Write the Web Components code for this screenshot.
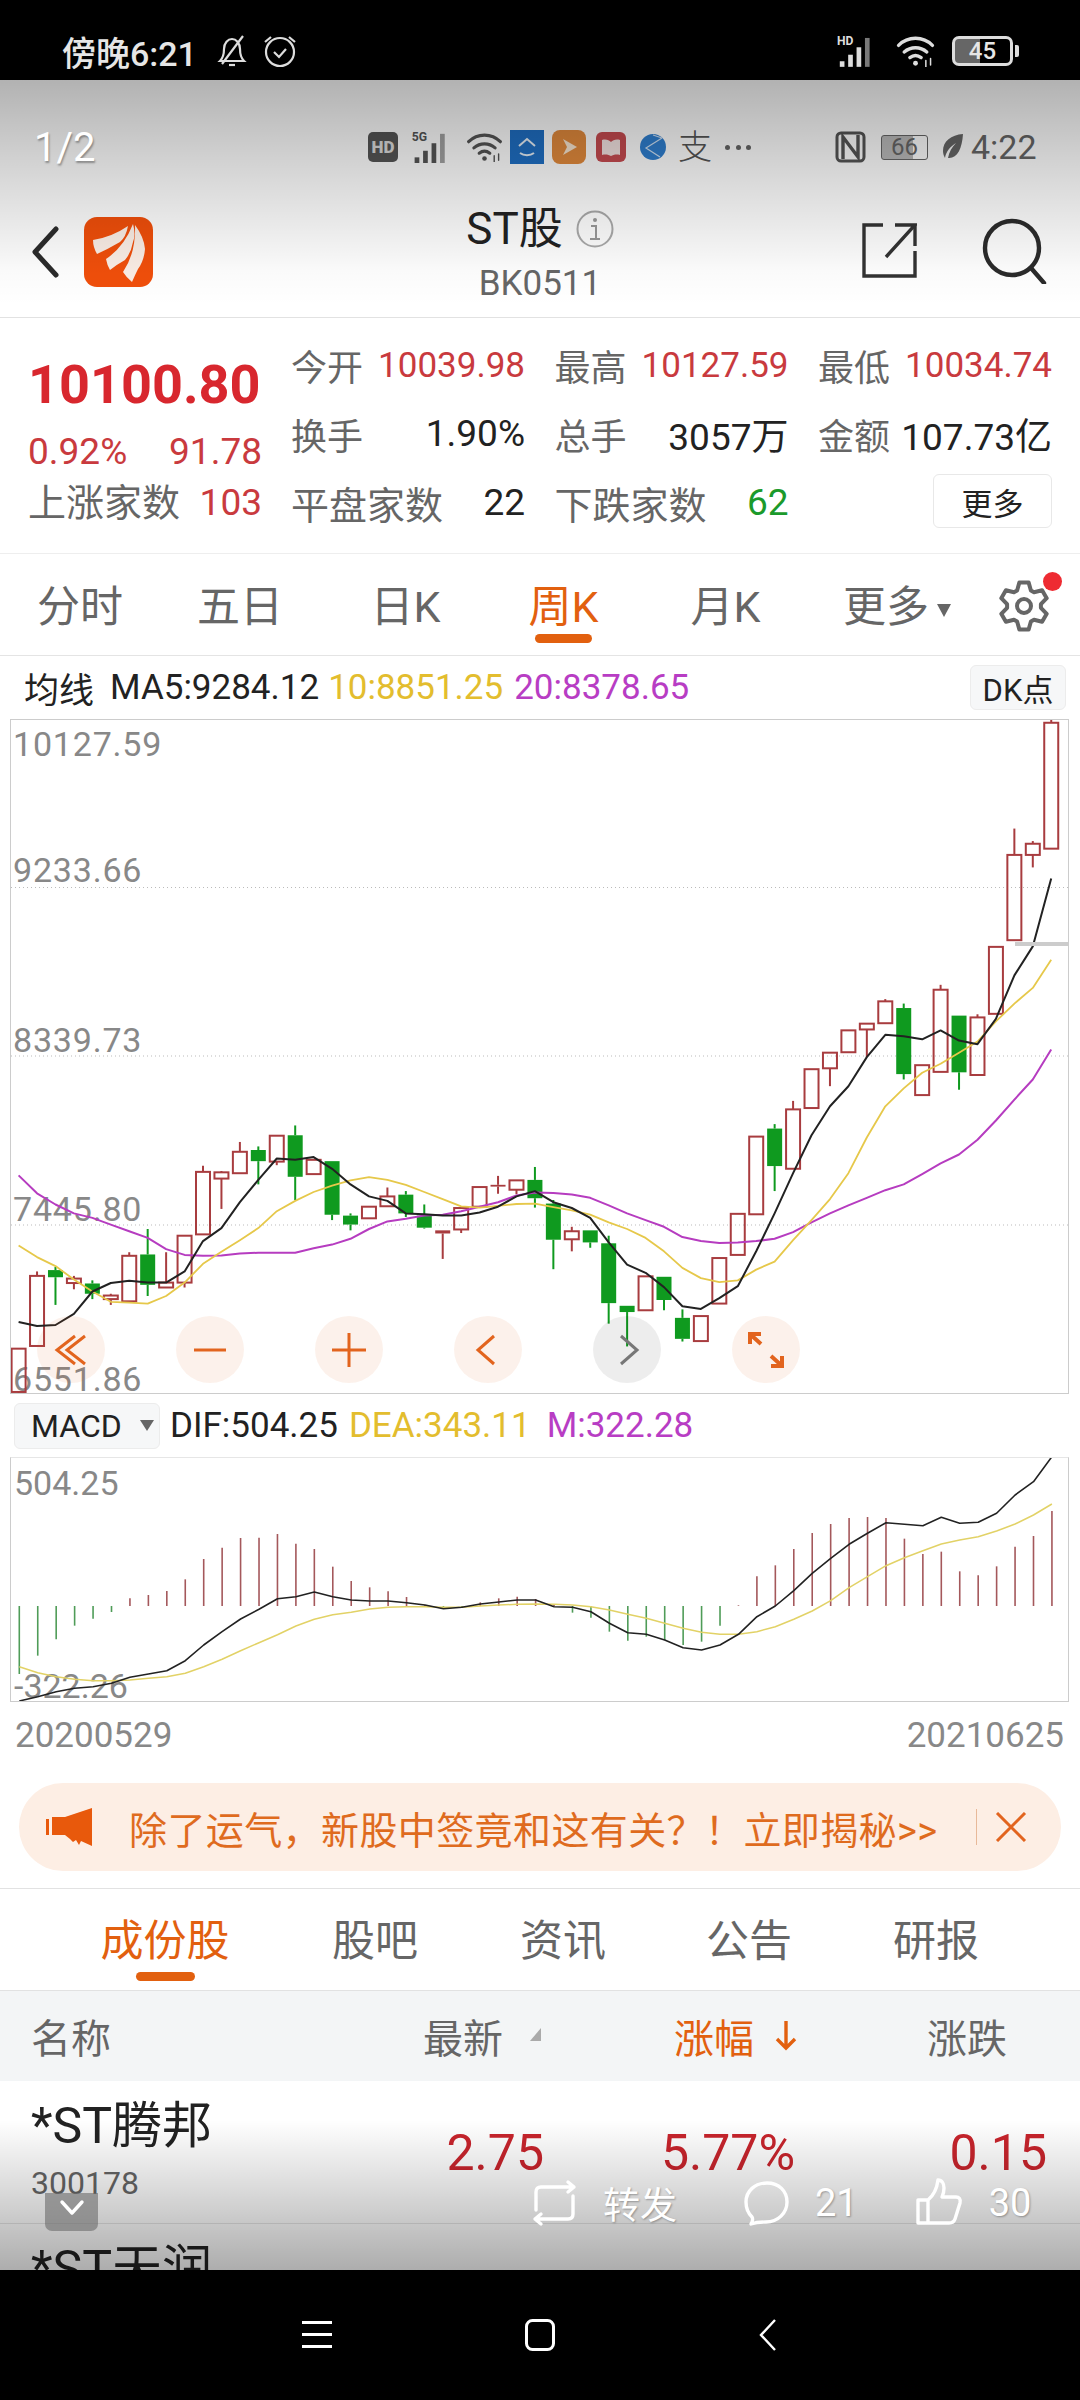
<!DOCTYPE html>
<html lang="zh">
<head>
<meta charset="utf-8">
<title>ST股</title>
<style>
  html, body { margin: 0; padding: 0; background: #000; }
  body {
    width: 1080px;
    height: 2400px;
    display: flex;
    flex-direction: column;
    overflow: hidden;
    font-family: Roboto, "Noto Sans CJK SC", sans-serif;
  }
  .screen {
    position: relative;
    height: 2190px;
    background: #fff;
    overflow: hidden;
  }
</style>
</head>
<body>
<status-bar></status-bar>
<div class="screen">
  <sys-tray></sys-tray>
  <app-header></app-header>
  <quote-panel>
    <quote-cell label="今开" tone="red">10039.98</quote-cell>
    <quote-cell label="最高" tone="red">10127.59</quote-cell>
    <quote-cell label="最低" tone="red">10034.74</quote-cell>
    <quote-cell label="换手">1.90%</quote-cell>
    <quote-cell label="总手">3057万</quote-cell>
    <quote-cell label="金额">107.73亿</quote-cell>
    <quote-cell label="平盘家数">22</quote-cell>
    <quote-cell label="下跌家数" tone="green">62</quote-cell>
    <more-button>更多</more-button>
  </quote-panel>
  <period-tabs></period-tabs>
  <ma-legend></ma-legend>
  <kline-chart></kline-chart>
  <macd-chart></macd-chart>
  <promo-banner>除了运气，新股中签竟和这有关？！立即揭秘&gt;&gt;</promo-banner>
  <sub-tabs></sub-tabs>
  <stock-table>
    <stock-row name="*ST腾邦" code="300178" price="2.75" pct="5.77%" chg="0.15"></stock-row>
    <stock-row name="*ST天润"></stock-row>
  </stock-table>
  <page-overlay></page-overlay>
</div>
<nav-bar></nav-bar>

<script>
const FONT = 'Roboto, "Noto Sans CJK SC", sans-serif';

// small base class, every element just declares css + html
class Shadowed extends HTMLElement {
  constructor() {
    super();
    this.attachShadow({ mode: 'open' });
  }
  connectedCallback() {
    this.shadowRoot.innerHTML = `<style>${this.css()}</style>${this.html()}`;
    this.afterRender && this.afterRender();
  }
  css() { return ''; }
  html() { return '<slot></slot>'; }
}

function wifiIcon(color, w, h) {
  return `<svg width="${w}" height="${h}" viewBox="0 0 40 34" fill="none" stroke="${color}" stroke-width="3.6" stroke-linecap="round">
    <path d="M2 11C12 1 28 1 38 11"/><path d="M8 18c7-6 17-6 24 0"/><path d="M14 24c4-3 8-3 12 0"/>
    <circle cx="20" cy="30" r="2.6" fill="${color}" stroke="none"/>
    <path d="M31 27v7M36 25v7" stroke-width="1.6"/></svg>`;
}

function signalIcon(color, w, h, label) {
  return `<svg width="${w}" height="${h}" viewBox="0 0 44 34">
    <g fill="${color}"><rect x="3" y="28" width="5" height="6"/><rect x="12" y="21" width="5" height="13"/><rect x="21" y="13" width="5" height="21"/>
    <rect x="30" y="3" width="5" height="31" opacity=".55"/></g>
    <text x="0" y="11" font-size="13" font-weight="700" fill="${color}" font-family='${FONT}'>${label}</text></svg>`;
}

class StatusBar extends Shadowed {
  css() {
    return `
      :host { display: flex; align-items: center; height: 80px; padding: 22px 0 0 62px; box-sizing: border-box; background: #000; color: #e6e6e6; font: 500 34px ${FONT}; }
      .time { width: 134px; white-space: nowrap; }
      svg { display: block; flex: none; }
      .batt { box-sizing: border-box; width: 61px; height: 30px; border: 3px solid #ddd; border-radius: 7px; display: flex; align-items: center; justify-content: center; font-size: 24px; font-weight: 500; line-height: 1; background: linear-gradient(90deg, #666 45%, transparent 45%); }
      .cap { width: 4px; height: 12px; margin-left: 2px; background: #ddd; border-radius: 0 2px 2px 0; }
    `;
  }
  html() {
    return `
      <span class="time">傍晚6:21</span>
      <svg style="margin-left:21px" width="30" height="34" viewBox="0 0 30 34" fill="none" stroke="#ddd" stroke-width="2.2"><path d="M3 27c3-3 4-6 4-12 0-6 4-10 8-10s8 4 8 10c0 6 1 9 4 12z"/><path d="M12 31h6"/><path d="M26 2L5 30"/></svg>
      <svg style="margin-left:15px" width="36" height="34" viewBox="0 0 36 34" fill="none" stroke="#ddd" stroke-width="2.2"><circle cx="18" cy="18" r="14"/><path d="M12 18l5 5 7-8"/><path d="M3 8l6-5M33 8l-6-5"/></svg>
      <span style="margin-left:539px">${signalIcon('#ddd', 41, 32, 'HD')}</span>
      <span style="margin-left:16px">${wifiIcon('#ddd', 43, 32)}</span>
      <span class="batt" style="margin-left:15px">45</span><span class="cap"></span>
    `;
  }
}

class SysTray extends Shadowed {
  css() {
    return `
      :host { position: relative; display: flex; align-items: center; height: 125px; padding: 9px 0 0 34px; box-sizing: border-box; color: #666; font: 34px ${FONT}; }
      .page { position: relative; z-index: 3; width: 61px; font-size: 40px; color: #fff; text-shadow: 1px 2px 2px rgba(0,0,0,.35); }
      svg, span { flex: none; display: block; }
      .zhi { font-size: 34px; width: 33px; line-height: 34px; color: #555; font-weight: 300; }
      .dots { width: 26px; display: flex; justify-content: space-between; }
      .dots i { width: 5px; height: 5px; background: #666; border-radius: 50%; }
      .batt { width: 47px; height: 25px; box-sizing: border-box; border: 1.5px solid #666; border-radius: 3px; font-size: 24px; line-height: 22px; text-align: center; background: linear-gradient(90deg, #bbb 70%, transparent 70%); }
      .clock { color: #666; width: 63px; font-size: 34px; white-space: nowrap; }
    `;
  }
  html() {
    return `
      <span class="page">1/2</span>
      <svg style="margin-left:273px" width="30" height="30" viewBox="0 0 30 30"><rect width="30" height="30" rx="5" fill="#555"/><text x="15" y="21" text-anchor="middle" font-size="17" font-weight="900" fill="#ddd" font-family='${FONT}'>HD</text></svg>
      <span style="margin-left:10px">${signalIcon('#555', 49, 32, '5G')}</span>
      <span style="margin-left:9px">${wifiIcon('#555', 37, 30)}</span>
      <svg style="margin-left:7px" width="34" height="34" viewBox="0 0 34 34"><rect width="34" height="34" fill="#1f6fc4"/><path d="M9 16l8-7 8 7" fill="none" stroke="#e8f0f8" stroke-width="2"/><path d="M10 23c4 3 10 3 14 0" fill="none" stroke="#e8f0f8" stroke-width="2"/></svg>
      <svg style="margin-left:8px" width="34" height="34" viewBox="0 0 34 34"><rect width="34" height="34" rx="8" fill="#e28a3c"/><path d="M11 9l14 8-14 8 4-8z" fill="#f8e6d0"/></svg>
      <svg style="margin-left:10px" width="30" height="30" viewBox="0 0 30 30"><rect width="30" height="30" rx="6" fill="#c74b50"/><path d="M6 8c4-1 7 0 9 2 2-2 5-3 9-2v15c-4-1-7 0-9 1-2-1-5-2-9-1z" fill="#f4e4e2"/></svg>
      <svg style="margin-left:14px" width="26" height="30" viewBox="0 0 26 30"><circle cx="13" cy="15" r="13" fill="#2f7fd0"/><path d="M22 6L6 16l14 9M13 3l9 3" fill="none" stroke="#cfe2f5" stroke-width="1.2"/></svg>
      <span class="zhi" style="margin-left:12px">支</span>
      <span class="dots" style="margin-left:14px"><i></i><i></i><i></i></span>
      <svg style="margin-left:84px" width="31" height="32" viewBox="0 0 31 32" fill="none" stroke="#555" stroke-width="3"><rect x="2" y="2" width="27" height="28" rx="4"/><path d="M8 28V6l15 20V4" stroke-width="3.4"/></svg>
      <span class="batt" style="margin-left:15px">66</span>
      <svg style="margin-left:13px" width="23" height="28" viewBox="0 0 23 28"><path d="M22 1C10 2 2 8 2 18c0 3 1 5 2 7 1-7 6-12 11-15-4 4-7 9-8 15 9 1 14-9 15-24z" fill="#666"/></svg>
      <span class="clock" style="margin-left:7px">4:22</span>
    `;
  }
}

class AppHeader extends Shadowed {
  css() {
    return `
      :host { display: grid; grid-template-columns: 1fr auto 1fr; height: 113px; box-sizing: border-box; border-bottom: 1px solid #e2e2e2; color: #222; font-family: ${FONT}; }
      .left { display: flex; align-items: flex-start; padding: 12px 0 0 31px; }
      .back { margin: 9px 0 0 0; }
      .logo { margin-left: 25px; }
      .mid { display: flex; flex-direction: column; align-items: center; }
      .title { display: flex; align-items: center; height: 44px; margin-top: 2px; font-size: 44px; line-height: 44px; }
      .title svg { margin-left: 13px; }
      .code { margin-top: 13px; font-size: 35px; line-height: 40px; color: #666; }
      .right { display: flex; justify-content: flex-end; align-items: flex-start; padding: 13px 33px 0 0; }
      .share { margin: 5px 64px 0 0; }
    `;
  }
  html() {
    return `
      <div class="left">
        <svg class="back" width="28" height="52" viewBox="0 0 28 52" fill="none" stroke="#2b2b2b" stroke-width="5" stroke-linecap="round" stroke-linejoin="round"><path d="M25 3L4 26l21 23"/></svg>
        <svg class="logo" width="69" height="70" viewBox="0 0 69 70"><rect width="69" height="70" rx="13" fill="#f14f0b"/>
          <g fill="#fbeee6"><path d="M9 23Q28 20 44 9Q42 20 36 25Q24 32 13 37Q9 30 9 23z"/><path d="M22 42Q40 30 49 7Q52 18 49 25Q47 36 41 43Q32 48 26 53Q23 48 22 42z"/><path d="M39 55Q52 36 51 8Q60 20 61 32Q60 44 54 52Q51 58 48 65Q42 60 39 55z"/></g></svg>
      </div>
      <div class="mid">
        <div class="title">ST股<svg width="38" height="38" viewBox="0 0 38 38" fill="none"><circle cx="19" cy="19" r="17.5" stroke="#aaa" stroke-width="2"/><circle cx="19" cy="10" r="2" fill="#999"/><path d="M15 16h5v13M14 29h10" stroke="#999" stroke-width="2"/></svg></div>
        <div class="code">BK0511</div>
      </div>
      <div class="right">
        <svg class="share" width="55" height="55" viewBox="0 0 55 55" fill="none" stroke="#333" stroke-width="3.4"><path d="M21 2H2v51h51V28"/><path d="M53 2v21" stroke-width="3.4"/><path d="M33 2h20L24 34"/></svg>
        <svg width="66" height="66" viewBox="0 0 66 66" fill="none" stroke="#2b2b2b" stroke-width="4.4"><circle cx="31" cy="30" r="27"/><path d="M50 50l13 15" stroke-linecap="round"/></svg>
      </div>
    `;
  }
}

class QuotePanel extends Shadowed {
  css() {
    return `
      :host { display: flex; height: 236px; box-sizing: border-box; padding-left: 28px; border-bottom: 1px solid #eee; font-family: ${FONT}; }
      .left { width: 234px; flex: none; }
      .price { margin-top: 37px; height: 60px; font-size: 54px; line-height: 60px; font-weight: 700; color: #d8272e; }
      .sub { margin-top: 14px; height: 46px; display: flex; justify-content: space-between; font-size: 37px; line-height: 46px; color: #c93a3e; }
      .rise { height: 58px; display: flex; justify-content: space-between; font-size: 38px; line-height: 56px; color: #666; }
      .rise b { font-weight: 400; color: #c93a3e; font-size: 37px; }
      .grid { margin: 13px 0 0 29px; display: grid; grid-template-columns: repeat(3, 234px); grid-auto-rows: 68.5px; column-gap: 29.5px; }
    `;
  }
  html() {
    return `
      <div class="left">
        <div class="price">10100.80</div>
        <div class="sub"><span>0.92%</span><span>91.78</span></div>
        <div class="rise"><span>上涨家数</span><b>103</b></div>
      </div>
      <div class="grid"><slot></slot></div>
    `;
  }
}

class QuoteCell extends Shadowed {
  css() {
    const tones = { red: '#c93a3e', green: '#1b9a2b' };
    const tone = this.getAttribute('tone');
    const long = this.getAttribute('label').length > 2;
    return `
      :host { display: flex; justify-content: space-between; align-items: center; font-size: ${long ? 38 : 36}px; color: #666; white-space: nowrap; }
      .value { color: ${tones[tone] || '#222'}; font-size: ${tone === 'red' ? 35 : 37}px; }
    `;
  }
  html() {
    return `<span>${this.getAttribute('label')}</span><span class="value"><slot></slot></span>`;
  }
}

class MoreButton extends Shadowed {
  css() {
    return `
      :host { display: flex; align-items: center; justify-content: center; justify-self: end; align-self: center; width: 119px; height: 54px; box-sizing: border-box; margin-top: -2px; border: 1px solid #e8e8e8; border-radius: 6px; font-size: 31px; color: #222; }
    `;
  }
}

class PeriodTabs extends Shadowed {
  css() {
    return `
      :host { display: grid; grid-template-columns: 160px 160px 171px 145px 179px 140px 125px; height: 102px; box-sizing: border-box; border-bottom: 1px solid #e4e4e4; font: 43px ${FONT}; color: #666; }
      .tab { display: flex; flex-direction: column; align-items: center; padding-top: 30px; line-height: 46px; white-space: nowrap; }
      .tab.on { color: #e2600f; }
      .tab.on::after { content: ""; width: 57px; height: 9px; margin-top: 4px; border-radius: 5px; background: #e2600f; }
      .tab.more { padding-left: 24px; }
      .tri { display: inline-block; margin-left: 8px; vertical-align: middle; border: 7px solid transparent; border-top: 13px solid #666; border-bottom: 0; }
      .gear { position: relative; padding: 26px 0 0 44px; }
      .dot { position: absolute; left: 88px; top: 18px; width: 19px; height: 19px; border-radius: 50%; background: #ee2b32; }
    `;
  }
  html() {
    return `
      <div class="tab">分时</div><div class="tab">五日</div><div class="tab">日K</div>
      <div class="tab on">周K</div><div class="tab">月K</div>
      <div class="tab more"><span>更多<i class="tri"></i></span></div>
      <div class="gear"><svg id="gear" width="50" height="52" viewBox="0 0 50 52" fill="none" stroke="#666" stroke-width="4"></svg><i class="dot"></i></div>
    `;
  }
  afterRender() {
    // six tooth outline, easier to compute than to write by hand
    const pts = [];
    for (let i = 0; i < 6; i++) {
      const a = -90 + i * 60;
      [[-24, 17], [-11, 24], [11, 24], [24, 17]].forEach(([da, r]) => {
        const t = (a + da) * Math.PI / 180;
        pts.push((25 + r * Math.cos(t)).toFixed(1) + ' ' + (26 + r * Math.sin(t)).toFixed(1));
      });
    }
    this.shadowRoot.getElementById('gear').innerHTML =
      `<path d="M${pts.join('L')}z" stroke-linejoin="round"/><circle cx="25" cy="26" r="7"/>`;
  }
}

class MaLegend extends Shadowed {
  css() {
    return `
      :host { display: flex; align-items: center; height: 63px; box-sizing: border-box; padding: 0 14px 0 24px; font: 35px ${FONT}; color: #222; white-space: nowrap; }
      .ma { margin-left: 16px; }
      .y { margin-left: 9px; color: #e3bd2e; }
      .p { margin-left: 11px; color: #b83dc4; }
      .dk { margin-left: auto; width: 96px; height: 45px; display: flex; align-items: center; justify-content: center; background: #f6f7f8; border: 1px solid #ececec; border-radius: 6px; box-sizing: border-box; font-size: 31px; }
    `;
  }
  html() {
    return `<span>均线</span><span class="ma">MA5:9284.12</span><span class="y">10:8851.25</span><span class="p">20:8378.65</span><span class="dk">DK点</span>`;
  }
}

// raw values were read off the chart, y in crop units -> page px
const kY = z => 700 + z / 2.24;
const kX = i => 18.6 + i * 18.44;

// [hollow?, wickTop, bodyTop, bodyBottom, wickBottom]
const CANDLES = [
  [1,1453,1453,1550,1556],[1,1280,1290,1447,1447],[0,1270,1277,1293,1355],[1,1290,1296,1306,1320],[0,1300,1307,1330,1342],
  [1,1330,1334,1342,1355],[1,1237,1245,1347,1350],[0,1185,1242,1310,1335],[1,1237,1305,1316,1316],[1,1200,1200,1305,1316],
  [1,1043,1057,1197,1197],[1,1055,1058,1072,1140],[1,990,1012,1060,1060],[0,1000,1008,1033,1085],[1,976,976,1034,1042],
  [0,953,975,1068,1120],[1,1030,1030,1062,1062],[0,1033,1033,1153,1165],[0,1150,1155,1175,1188],[1,1135,1135,1161,1161],
  [1,1092,1112,1134,1134],[0,1100,1108,1150,1158],[0,1130,1155,1182,1184],[2,1188,1188,1195,1252],[1,1138,1138,1186,1194],
  [1,1091,1091,1135,1135],[2,1066,1086,1090,1106],[1,1076,1076,1097,1107],[0,1046,1075,1116,1137],[0,1120,1128,1209,1275],
  [1,1180,1190,1208,1235],[0,1188,1188,1215,1227],[0,1200,1217,1351,1397],[0,1357,1357,1371,1448],[1,1291,1291,1367,1367],
  [0,1292,1292,1344,1367],[0,1365,1384,1431,1437],[1,1380,1380,1436,1438],[1,1250,1250,1352,1352],[1,1151,1151,1243,1243],
  [1,978,978,1152,1152],[0,950,960,1044,1100],[1,898,917,1050,1050],[1,827,827,914,914],[1,790,790,825,865],
  [1,740,740,789,789],[1,725,725,738,800],[1,670,675,724,724],[0,680,690,838,850],[1,818,818,885,885],
  [1,638,649,833,833],[0,707,707,834,873],[1,704,711,840,840],[1,553,553,703,703],[1,288,347,538,538],
  [1,316,322,347,375],[1,40,51,333,333]
];

const MA5 = [1393,1402,1400,1375,1325,1306,1301,1305,1305,1280,1212,1183,1125,1075,1027,1030,1024,1050,1085,1112,1122,1150,1152,1155,1155,1148,1135,1112,1100,1125,
  1138,1160,1215,1265,1283,1315,1358,1364,1340,1313,1235,1150,1060,975,910,865,800,750,753,760,740,763,771,714,617,552,400];
const MA10 = [1222,1248,1268,1298,1325,1348,1350,1352,1335,1305,1263,1236,1210,1183,1145,1122,1102,1088,1076,1069,1075,1086,1102,1118,1134,1137,1133,1129,1128,1136,
  1143,1153,1170,1185,1205,1235,1272,1295,1304,1300,1276,1258,1210,1165,1118,1060,980,910,870,835,815,790,765,720,680,645,582];
const MA20 = [1065,1105,1130,1150,1160,1175,1190,1205,1230,1243,1245,1244,1240,1238,1238,1238,1228,1220,1207,1185,1168,1162,1155,1153,1145,1135,1125,1110,1103,1104,
  1108,1115,1132,1150,1165,1180,1203,1212,1216,1215,1212,1207,1192,1170,1150,1132,1115,1098,1085,1062,1038,1018,985,942,895,850,783];

function polyline(vals, xFn, yFn, color, w) {
  const pts = vals.map((v, i) => xFn(i).toFixed(1) + ',' + yFn(v).toFixed(1)).join(' ');
  return `<polyline points="${pts}" fill="none" stroke="${color}" stroke-width="${w}" stroke-linejoin="round"/>`;
}

class KlineChart extends Shadowed {
  css() {
    return `
      :host { display: block; position: relative; width: 1059px; height: 675px; margin-left: 10px; box-sizing: border-box; border: 1px solid #ccc; font: 34px ${FONT}; color: #888; }
      .tick { position: absolute; left: 2px; line-height: 34px; letter-spacing: .8px; }
      svg.plot { position: absolute; left: 0; top: 0; width: 100%; height: 100%; }
      .tools { position: absolute; left: 26px; top: 596px; display: flex; gap: 71px; }
      .tool { width: 68px; height: 67px; border-radius: 50%; background: rgba(226,100,30,.09); display: flex; align-items: center; justify-content: center; }
      .tool.off { background: rgba(0,0,0,.07); }
      .edge { position: absolute; right: 0; top: 222px; width: 53px; height: 4px; background: #ccc; }
    `;
  }
  html() {
    const grid = [887.5, 1056, 1225].map(y => `<line x1="11" x2="1068" y1="${y}" y2="${y}" stroke="#bbb" stroke-width="1" stroke-dasharray="1 3"/>`).join('');
    const candles = CANDLES.map(([kind, wt, bt, bb, wb], i) => {
      const x = kX(i);
      const color = kind === 0 ? '#0f9a1f' : '#a83c3f';
      let out = '';
      if (wt < bt) out += `<line x1="${x}" x2="${x}" y1="${kY(wt)}" y2="${kY(bt)}" stroke="${color}" stroke-width="2"/>`;
      if (wb > bb) out += `<line x1="${x}" x2="${x}" y1="${kY(bb)}" y2="${kY(wb)}" stroke="${color}" stroke-width="2"/>`;
      if (kind === 1) out += `<rect x="${x - 7}" y="${kY(bt)}" width="14" height="${(bb - bt) / 2.24}" fill="none" stroke="${color}" stroke-width="2"/>`;
      else out += `<rect x="${x - 7.5}" y="${kY(bt)}" width="15" height="${(bb - bt) / 2.24}" fill="${color}"/>`;
      return out;
    }).join('');
    const ticks = [['10127.59', 7], ['9233.66', 133], ['8339.73', 303], ['7445.80', 472], ['6551.86', 642]]
      .map(([t, top]) => `<span class="tick" style="top:${top}px">${t}</span>`).join('');
    const o = '#e2641e';
    const tools = [
      `<path d="M24 6L6 20l18 14M34 6L16 20l18 14" fill="none" stroke="${o}" stroke-width="3"/>`,
      `<path d="M4 20h32" stroke="${o}" stroke-width="3"/>`,
      `<path d="M3 20h34M20 3v34" stroke="${o}" stroke-width="3"/>`,
      `<path d="M26 6L10 20l16 14" fill="none" stroke="${o}" stroke-width="3"/>`,
      `<path d="M14 6l16 14-16 14" fill="none" stroke="#777" stroke-width="3"/>`,
      `<path d="M4 14V4h11M5 5l10 9M36 26v10H25M35 35l-10-9" fill="none" stroke="${o}" stroke-width="4"/>`
    ].map((p, i) => `<div class="tool${i === 4 ? ' off' : ''}"><svg width="40" height="40" viewBox="0 0 40 40">${p}</svg></div>`).join('');
    return `
      ${ticks}
      <svg class="plot" viewBox="11 720 1057 673">
        ${grid}${candles}
        ${polyline(MA20, kX, kY, '#b63cc0', 2)}
        ${polyline(MA10, kX, kY, '#e6c84a', 1.8)}
        ${polyline(MA5, kX, kY, '#222', 2)}
      </svg>
      <i class="edge"></i>
      <div class="tools">${tools}</div>
    `;
  }
}

const mY = z => 1400 + z / 3;
const mX = i => 19.3 + i * 18.44;
const BARS = [822,767,718,677,656,636,595,585,573,538,477,443,414,413,402,431,447,500,543,562,574,591,615,625,622,607,595,590,597,612,638,653,695,722,710,720,735,725,677,616,529,496,447,399,372,354,351,354,416,462,455,514,526,499,440,408,333];
const DIF = [903,890,875,865,860,850,832,822,812,782,735,695,657,628,596,590,576,590,600,603,603,608,615,626,622,612,606,600,600,620,622,635,670,698,703,720,743,750,735,703,650,618,572,520,475,433,400,368,373,377,352,370,367,340,285,245,170];
const DEA = [800,818,830,838,842,842,840,835,830,820,800,778,752,728,704,678,658,644,637,627,622,620,620,622,622,618,615,613,612,613,615,620,630,643,655,670,685,697,703,703,695,680,658,633,602,563,530,497,473,452,432,420,410,393,372,345,312];

class MacdChart extends Shadowed {
  css() {
    return `
      :host { display: block; font: 35px ${FONT}; color: #222; white-space: nowrap; }
      .bar { display: flex; align-items: center; height: 63px; padding: 0 0 0 14px; }
      .pick { display: flex; align-items: center; width: 146px; height: 46px; box-sizing: border-box; padding-left: 16px; background: #f6f7f8; border: 1px solid #ececec; border-radius: 6px; font-size: 32px; }
      .pick i { margin-left: 18px; border: 7px solid transparent; border-top: 11px solid #666; border-bottom: 0; }
      .dif { margin-left: 10px; }
      .dea { margin-left: 11px; color: #e3bd2e; }
      .m { margin-left: 16px; color: #b83dc4; }
      .frame { position: relative; width: 1059px; height: 245px; margin-left: 10px; box-sizing: border-box; border: 1px solid #ccc; border-top-color: #e6e6e6; font-size: 34px; color: #888; }
      .frame svg { position: absolute; left: 0; top: 0; width: 100%; height: 100%; }
      .tick { position: absolute; left: 3px; line-height: 34px; }
      .dates { display: flex; justify-content: space-between; height: 68px; padding: 16px 16px 0 15px; box-sizing: border-box; font-size: 35px; line-height: 36px; color: #888; }
    `;
  }
  html() {
    const bars = BARS.map((top, i) => {
      const x = mX(i);
      const c = top > 618 ? '#4f9c58' : '#a4585b';
      return `<line x1="${x}" x2="${x}" y1="${mY(Math.min(top, 618))}" y2="${mY(Math.max(top, 618))}" stroke="${c}" stroke-width="1.6"/>`;
    }).join('');
    return `
      <div class="bar">
        <span class="pick">MACD<i></i></span>
        <span class="dif">DIF:504.25</span><span class="dea">DEA:343.11</span><span class="m">M:322.28</span>
      </div>
      <div class="frame">
        <span class="tick" style="top:8px">504.25</span>
        <span class="tick" style="top:211px">-322.26</span>
        <svg viewBox="11 1458 1057 243">
          ${bars}
          ${polyline(DEA, mX, mY, '#e2d266', 1.5)}
          ${polyline(DIF, mX, mY, '#222', 1.6)}
        </svg>
      </div>
      <div class="dates"><span>20200529</span><span>20210625</span></div>
    `;
  }
}

class PromoBanner extends Shadowed {
  css() {
    return `
      :host { display: block; padding: 13px 19px 17px; border-bottom: 1px solid #e2e2e2; font: 38px ${FONT}; color: #df6b1e; }
      .pill { display: flex; align-items: center; height: 88px; padding-left: 27px; background: #fdeee4; border-radius: 44px; white-space: nowrap; }
      .msg { width: 847px; margin-left: 37px; overflow: hidden; letter-spacing: .4px; }
      .sep { width: 1px; height: 36px; background: #e8b999; margin-left: 0; }
      .close { margin-left: 18px; }
    `;
  }
  html() {
    return `
      <div class="pill">
        <svg width="46" height="38" viewBox="0 0 46 38"><path d="M0 11h3v16H0zM6 9h13L46 0v38l-11-5-2 4-3-5-3 2-3-3-5-4H6z" fill="#e8590c"/></svg>
        <span class="msg"><slot></slot></span>
        <i class="sep"></i>
        <svg class="close" width="32" height="30" viewBox="0 0 32 30" fill="none" stroke="#e2641e" stroke-width="3"><path d="M2 1l28 28M30 1L2 29"/></svg>
      </div>
    `;
  }
}

class SubTabs extends Shadowed {
  css() {
    return `
      :host { display: grid; grid-template-columns: 210px 210px 166px 206px 168px; height: 102px; box-sizing: border-box; padding-left: 60px; border-bottom: 1px solid #e2e2e2; font: 43px ${FONT}; color: #666; }
      .tab { display: flex; flex-direction: column; align-items: center; padding-top: 28px; line-height: 48px; }
      .on { color: #e2600f; }
      .on::after { content: ""; width: 59px; height: 9px; margin-top: 7px; border-radius: 5px; background: #e2600f; }
    `;
  }
  html() {
    return `<div class="tab on">成份股</div><div class="tab">股吧</div><div class="tab">资讯</div><div class="tab">公告</div><div class="tab">研报</div>`;
  }
}

class StockTable extends Shadowed {
  css() {
    return `
      :host { display: block; font-family: ${FONT}; }
      .head { display: grid; grid-template-columns: 349px 164px 251px 252px; align-items: center; height: 90px; padding: 0 33px 0 31px; background: #f3f5f6; font-size: 40px; color: #666; }
      .r { display: flex; align-items: center; justify-content: flex-end; }
      .on { color: #e2600f; }
      .tri { width: 0; height: 0; margin: -4px 3px 0 27px; border-left: 11px solid transparent; border-bottom: 13px solid #aaa; }
      .arrow { margin-left: 21px; margin-right: -2px; }
      .last { padding-right: 40px; }
    `;
  }
  html() {
    return `
      <div class="head">
        <span>名称</span>
        <span class="r">最新<i class="tri"></i></span>
        <span class="r on">涨幅<svg class="arrow" width="22" height="30" viewBox="0 0 22 30" fill="none" stroke="#e2600f" stroke-width="3.4"><path d="M11 0v27M2 18l9 9 9-9"/></svg></span>
        <span class="r last">涨跌</span>
      </div>
      <slot></slot>
    `;
  }
}

class StockRow extends Shadowed {
  css() {
    return `
      :host { display: grid; grid-template-columns: 349px 164px 251px 252px; align-items: start; height: 143px; box-sizing: border-box; padding: 20px 33px 0 31px; border-bottom: 1px solid #e6e6e6; font-family: ${FONT}; }
      .name { font-size: 50px; line-height: 50px; color: #222; white-space: nowrap; }
      .code { margin-top: 12px; font-size: 32px; line-height: 40px; color: #666; }
      .num { margin-top: 23px; font-size: 50px; line-height: 58px; color: #c8242c; text-align: right; }
    `;
  }
  html() {
    const a = n => this.getAttribute(n) || '';
    return `
      <div><div class="name">${a('name')}</div><div class="code">${a('code')}</div></div>
      <div class="num">${a('price')}</div><div class="num">${a('pct')}</div><div class="num">${a('chg')}</div>
    `;
  }
}

// screenshot-viewer chrome lying over the page: the two shades and the action row
class PageOverlay extends Shadowed {
  css() {
    return `
      :host { position: absolute; left: 0; top: 0; width: 1080px; height: 2190px; pointer-events: none; font: 37px ${FONT}; color: #fff; text-shadow: 1px 1px 2px rgba(0,0,0,.3); }
      .shade-top { position: absolute; left: 0; right: 0; top: 0; height: 225px; background: linear-gradient(rgba(0,0,0,.3), rgba(0,0,0,.18) 35%, rgba(0,0,0,.02) 85%, transparent); }
      .shade-bottom { position: absolute; left: 0; right: 0; bottom: 0; height: 150px; background: linear-gradient(transparent, rgba(0,0,0,.14) 45%, rgba(0,0,0,.32)); }
      .fold { position: absolute; left: 45px; top: 2113px; width: 53px; height: 38px; border-radius: 0 0 7px 7px; background: rgba(110,110,110,.62); display: flex; justify-content: center; padding-top: 7px; box-sizing: border-box; }
      .actions { position: absolute; left: 534px; top: 2099px; display: flex; align-items: center; height: 48px; white-space: nowrap; }
      svg { display: block; flex: none; overflow: visible; }
      .n { font-size: 38px; }
    `;
  }
  html() {
    const line = 'fill="none" stroke="#fff" stroke-width="3.4" stroke-linecap="round" stroke-linejoin="round"';
    return `
      <div class="shade-top"></div>
      <div class="shade-bottom"></div>
      <div class="fold"><svg width="24" height="15" viewBox="0 0 24 15" ${line}><path d="M2 2l10 11L22 2"/></svg></div>
      <div class="actions">
        <svg width="41" height="44" viewBox="0 0 41 44" ${line}><path d="M40 6H7Q2 6 2 11v18M34 1l6 5-6 5"/><path d="M1 38h33q5 0 5-5V15M7 33l-6 5 6 5"/></svg>
        <span style="margin-left:28px">转发</span>
        <svg style="margin-left:67px" width="45" height="44" viewBox="0 0 45 44" ${line}><path d="M7 43c2-3 2-5 1-7C4 32 2 27 2 21 2 10 11 2 23 2s20 8 20 19-9 20-21 20c-5 0-9 0-15 2z"/></svg>
        <span class="n" style="margin-left:26px">21</span>
        <svg style="margin-left:58px;margin-top:-4px" width="46" height="47" viewBox="0 0 46 47" ${line}><path d="M2 22h10v23H2zM12 22c6-5 9-12 10-20 4 0 6 4 6 8 0 3-1 7-2 9h14c3 0 5 2 4 6l-5 16c-1 3-3 4-6 4H12"/></svg>
        <span class="n" style="margin-left:27px">30</span>
      </div>
    `;
  }
}

class NavBar extends Shadowed {
  css() {
    return `
      :host { display: flex; justify-content: flex-start; align-items: flex-start; height: 130px; padding: 49px 0 0 302px; box-sizing: border-box; background: #000; }
      svg { display: block; flex: none; }
    `;
  }
  html() {
    return `
      <svg style="margin-top:2px" width="30" height="27" viewBox="0 0 30 27" fill="#fff"><rect width="30" height="3"/><rect y="12" width="30" height="3"/><rect y="24" width="30" height="3"/></svg>
      <svg style="margin-left:193px" width="30" height="32" viewBox="0 0 30 32" fill="none" stroke="#fff" stroke-width="3"><rect x="1.5" y="1.5" width="27" height="29" rx="6"/></svg>
      <svg style="margin-left:204px" width="17" height="32" viewBox="0 0 17 32" fill="none" stroke="#fff" stroke-width="2.4"><path d="M16 1L2 16l14 15"/></svg>
    `;
  }
}

customElements.define('status-bar', StatusBar);
customElements.define('sys-tray', SysTray);
customElements.define('app-header', AppHeader);
customElements.define('quote-cell', QuoteCell);
customElements.define('more-button', MoreButton);
customElements.define('quote-panel', QuotePanel);
customElements.define('period-tabs', PeriodTabs);
customElements.define('ma-legend', MaLegend);
customElements.define('kline-chart', KlineChart);
customElements.define('macd-chart', MacdChart);
customElements.define('promo-banner', PromoBanner);
customElements.define('sub-tabs', SubTabs);
customElements.define('stock-row', StockRow);
customElements.define('stock-table', StockTable);
customElements.define('page-overlay', PageOverlay);
customElements.define('nav-bar', NavBar);
</script>
</body>
</html>
